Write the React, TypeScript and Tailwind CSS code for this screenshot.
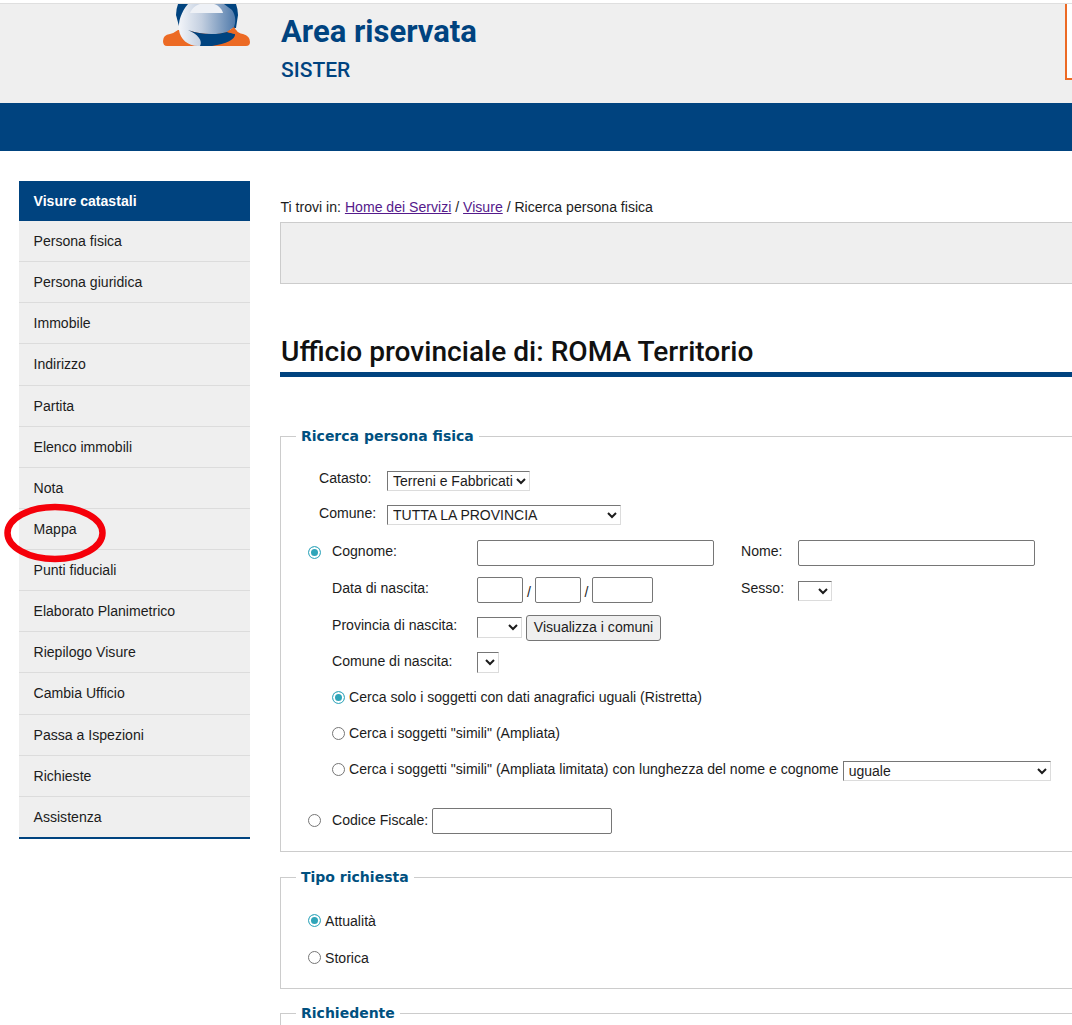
import React from 'react';

const menu = [
  'Persona fisica',
  'Persona giuridica',
  'Immobile',
  'Indirizzo',
  'Partita',
  'Elenco immobili',
  'Nota',
  'Mappa',
  'Punti fiduciali',
  'Elaborato Planimetrico',
  'Riepilogo Visure',
  'Cambia Ufficio',
  'Passa a Ispezioni',
  'Richieste',
  'Assistenza',
];

const inputCls = 'h-[26px] rounded-[2px] border border-[#767676] bg-white shrink-0';
const selectCls =
  'border border-t-[#767676] border-l-[#767676] border-r-[#dcdcdc] border-b-[#dcdcdc] bg-white pl-[1px] text-[14px] shrink-0';
const radioCls =
  'appearance-none w-[13px] h-[13px] m-0 shrink-0 rounded-full border border-[#767676] bg-white checked:border-[#45aec2] checked:bg-[#2fa5b9] checked:[box-shadow:inset_0_0_0_2px_#ffffff]';
const legendCls =
  "px-[5px] font-['DejaVu_Sans',sans-serif] text-[14px] font-bold leading-[18px] text-[#00507f]";

// coordinates are page pixels, the top of the mark is cut off by the header
function Logo() {
  return (
    <svg width="88" height="46" viewBox="163 4 88 46" className="shrink-0">
      <defs>
        <linearGradient id="eGrad" gradientUnits="userSpaceOnUse" x1="178" y1="0" x2="237" y2="0">
          <stop offset="0" stopColor="#f4f6fa" />
          <stop offset="0.4" stopColor="#c3cfe0" />
          <stop offset="1" stopColor="#4a76a8" />
        </linearGradient>
      </defs>
      <path d="M163 41 Q163 35 170 34 Q174 33 178 30 L236 30 Q238 33 243 34 Q250 36 250 42 Q250 46 246 46 L167 46 Q163 46 163 41Z" fill="#ec6a24" />
      <path d="M176 15 A31 31 0 0 1 238 15 L236 28 L180 30Z" fill="#00437f" />
      <path d="M188 4 C181 12 178 22 179 30 C180 39 188 46 198 46 L201 46 C204 40 198 34 188 30 C200 35 220 35 227 32 L234 27 C236 22 236 16 232 10 L224 4Z" fill="url(#eGrad)" />
      <path d="M190 13 C192 8 196 5 200 4 L214 4 C220 6 222 10 223 13Z" fill="#eef1f6" />
      <path d="M188 30 C200 35 218 35 227 32 L235 34 C236 39 226 44 212 46 L200 46 C203 41 198 34 188 30Z" fill="#00437f" />
      <path d="M227 32 L234 27 L238 33 L235 34Z" fill="#ec6a24" />
    </svg>
  );
}

export default function App() {
  return (
    <div className="relative h-[1025px] overflow-hidden bg-white font-['Liberation_Sans',Arial,sans-serif] text-[14.08px] text-[#1c1c1c]">
      {/* header */}
      <div className="mt-[3px] h-[100px] border-t border-[#dfdfdf] bg-[#efefef] flex items-start overflow-hidden">
        <div className="ml-[163px] w-[118px] shrink-0">
          <Logo />
        </div>
        <div className="font-['Roboto',sans-serif] text-[#00437f]">
          <div className="text-[31px] font-bold leading-[40px] mt-[8px]">Area riservata</div>
          <div className="text-[21px] font-medium leading-[28px] mt-[4px]">SISTER</div>
        </div>
        <div className="ml-auto mr-0 h-[76px] w-[7px] bg-white border-l-[2px] border-b-[2px] border-[#ec6a24]" />
      </div>
      <div className="h-[48px] bg-[#00437f]" />

      <div className="flex items-start mt-[30px]">
        {/* left menu */}
        <div className="ml-[19px] w-[231px] shrink-0 border-b-2 border-[#00437f] bg-[#efefef]">
          <div className="h-[40px] bg-[#00437f] pl-[14.5px] pt-[1px] flex items-center font-bold text-white">Visure catastali</div>
          {menu.map((item, i) => (
            <div
              key={item}
              className={`pl-[14.5px] pt-[1px] flex items-center ${i < menu.length - 1 ? 'h-[41.14px] border-b border-[#dcdcdc]' : 'h-[40.6px]'}`}
            >
              {item}
            </div>
          ))}
        </div>

        {/* main */}
        <div className="ml-[30px] w-[821px] shrink-0">
          <div className="h-[41px] pt-[18px] pl-[0.5px] leading-[16px]">
            Ti trovi in: <a className="underline text-[#551a8b]">Home dei Servizi</a> /{' '}
            <a className="underline text-[#551a8b]">Visure</a> / Ricerca persona fisica
          </div>
          <div className="h-[62px] border border-[#cccccc] bg-[#efefef]" />
          <h1 className="mt-[48px] pl-[1px] font-['Roboto',sans-serif] text-[28.1px] font-medium leading-[40px] text-[#111] border-b-[5px] border-[#00437f]">
            Ufficio provinciale di: ROMA Territorio
          </h1>

          <fieldset className="mt-[50px] h-[425px] border border-[#cccccc] pl-[27px]">
            <legend className={`-ml-[12px] ${legendCls}`}>Ricerca persona fisica</legend>
            <div className="flex items-start h-[34px] pt-[26px] box-content">
              <span className="ml-[11px] w-[68px] -mt-[3px]">Catasto:</span>
              <select className={`${selectCls} w-[143px] h-[20px]`}>
                <option>Terreni e Fabbricati</option>
              </select>
            </div>
            <div className="flex items-start h-[35px]">
              <span className="ml-[11px] w-[68px] -mt-[2px]">Comune:</span>
              <select className={`${selectCls} w-[234px] h-[20px]`}>
                <option>TUTTA LA PROVINCIA</option>
              </select>
            </div>
            <div className="flex items-start h-[37px]">
              <input type="radio" name="mode" defaultChecked className={`${radioCls} mt-[6px]`} />
              <span className="ml-[11px] w-[145px] mt-[1px]">Cognome:</span>
              <input className={`${inputCls} w-[237px]`} />
              <span className="ml-[27px] w-[57px] mt-[1px]">Nome:</span>
              <input className={`${inputCls} w-[237px]`} />
            </div>
            <div className="flex items-start h-[37px]">
              <span className="ml-[24px] w-[145px] mt-[1px]">Data di nascita:</span>
              <input className={`${inputCls} w-[46px]`} />
              <span className="w-[12px] text-center mt-[5px]">/</span>
              <input className={`${inputCls} w-[46px]`} />
              <span className="w-[11px] text-center mt-[5px]">/</span>
              <input className={`${inputCls} w-[61px]`} />
              <span className="ml-[88px] w-[57px] mt-[1px]">Sesso:</span>
              <select className={`${selectCls} w-[34px] h-[20px] mt-[4px]`} />
            </div>
            <div className="flex items-start h-[38px]">
              <span className="ml-[24px] w-[145px] mt-[1px]">Provincia di nascita:</span>
              <select className={`${selectCls} w-[45px] h-[21px] mt-[3px]`} />
              <button className="ml-[4px] mt-[1px] h-[26px] w-[135px] rounded-[3px] border border-[#767676] bg-[#efefef] text-center">
                Visualizza i comuni
              </button>
            </div>
            <div className="flex items-start h-[28px]">
              <span className="ml-[24px] w-[145px] -mt-[1px]">Comune di nascita:</span>
              <select className={`${selectCls} w-[22px] h-[21px]`} />
            </div>
            <div className="flex items-center h-[36px] ml-[24px] gap-[4px]">
              <input type="radio" name="sim" defaultChecked className={`${radioCls} -mt-[2px]`} />
              <span>Cerca solo i soggetti con dati anagrafici uguali (Ristretta)</span>
            </div>
            <div className="flex items-center h-[36px] ml-[24px] gap-[4px]">
              <input type="radio" name="sim" className={`${radioCls} -mt-[2px]`} />
              <span>Cerca i soggetti "simili" (Ampliata)</span>
            </div>
            <div className="flex items-center h-[36px] ml-[24px] gap-[4px]">
              <input type="radio" name="sim" className={`${radioCls} -mt-[2px]`} />
              <span>Cerca i soggetti "simili" (Ampliata limitata) con lunghezza del nome e cognome</span>
              <select className={`${selectCls} w-[208px] h-[20px] mt-[1px]`}>
                <option>uguale</option>
              </select>
            </div>
            <div className="flex items-center h-[26px] mt-[20px]">
              <input type="radio" name="mode" className={`${radioCls} -mt-[1px]`} />
              <span className="ml-[11px] mr-[4px]">Codice Fiscale:</span>
              <input className={`${inputCls} w-[180px]`} />
            </div>
          </fieldset>

          <fieldset className="mt-[16px] h-[121px] border border-[#cccccc] pl-[27px]">
            <legend className={`-ml-[12px] ${legendCls}`}>Tipo richiesta</legend>
            <div className="flex items-center h-[37px] mt-[17px] gap-[4px]">
              <input type="radio" name="tipo" defaultChecked className={`${radioCls} -mt-[2px]`} />
              <span>Attualità</span>
            </div>
            <div className="flex items-center h-[37px] gap-[4px]">
              <input type="radio" name="tipo" className={`${radioCls} -mt-[2px]`} />
              <span>Storica</span>
            </div>
          </fieldset>

          <fieldset className="mt-[15px] h-[60px] border border-[#cccccc]">
            <legend className={`ml-[15px] ${legendCls}`}>Richiedente</legend>
          </fieldset>
        </div>
      </div>

      {/* red marker drawn around Mappa */}
      <svg className="absolute left-0 top-[500px] pointer-events-none" width="112" height="68" viewBox="0 0 112 68">
        <ellipse cx="55" cy="33" rx="47.5" ry="26" fill="none" stroke="#f5000a" strokeWidth="6.5" />
      </svg>
    </div>
  );
}
